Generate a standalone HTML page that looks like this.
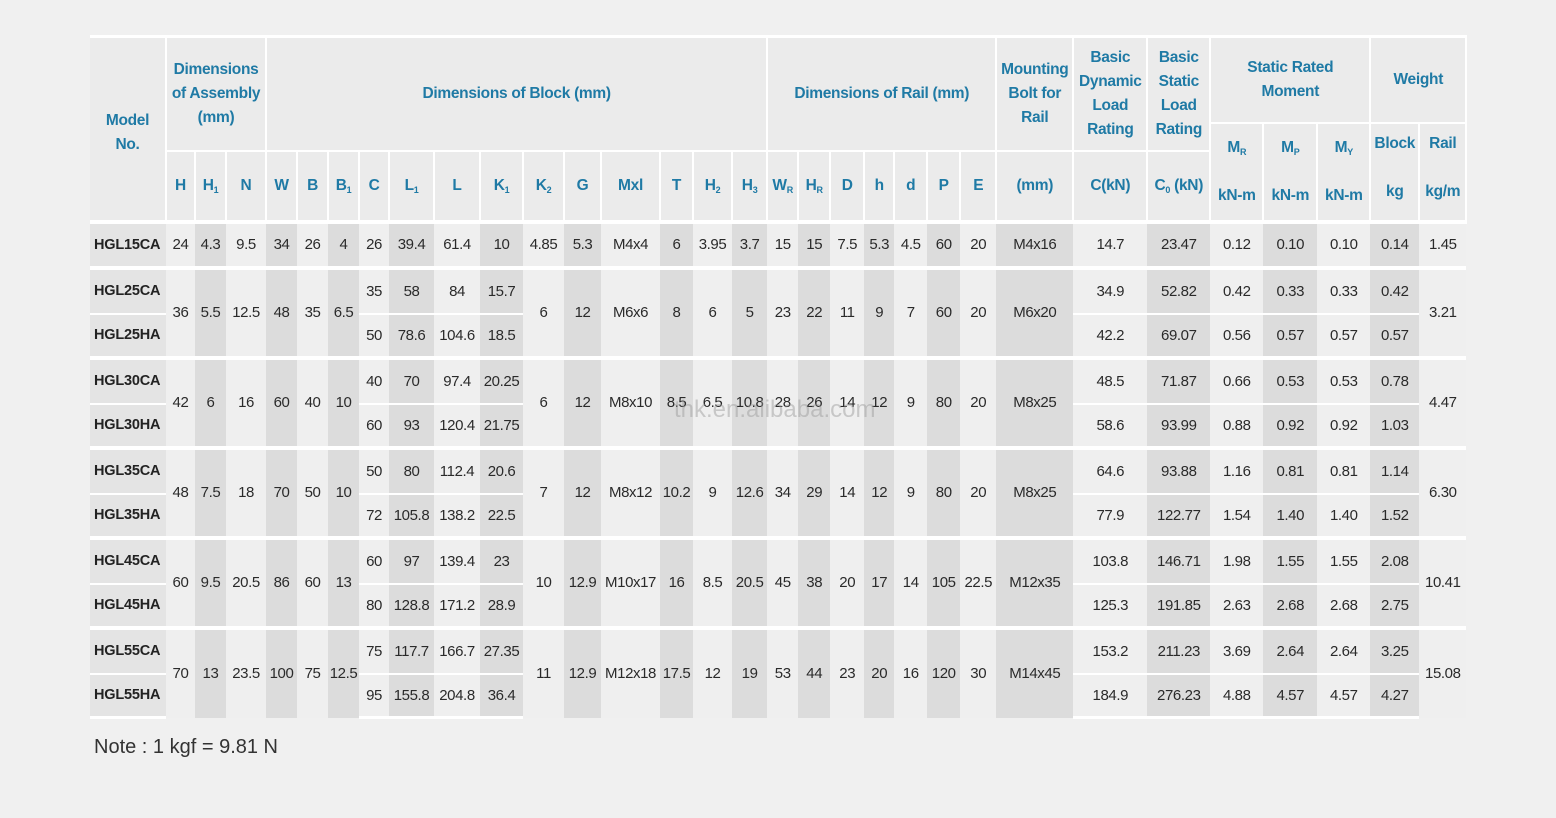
<!DOCTYPE html>
<html><head><meta charset="utf-8">
<style>
html,body{margin:0;padding:0;background:#f0f0f0;width:1556px;height:818px;overflow:hidden;position:relative}
table{position:absolute;left:90px;top:35px;border-collapse:collapse;table-layout:fixed;width:1376px;font-family:"Liberation Sans",sans-serif;}
td,th{padding:0;text-align:center;vertical-align:middle;white-space:nowrap;overflow:hidden}
th{background:#ebebeb;color:#1f7aa5;font-weight:bold;font-size:15.5px;line-height:24px;border:2px solid #fff;letter-spacing:-0.3px}
thead tr:first-child th{border-top:3px solid #fff}
thead th:first-child{border-left:none}
td{font-size:15px;color:#2a2a2a;border-left:none;border-right:none;letter-spacing:-0.4px}
td.m{font-weight:bold;text-align:left;padding-left:4px;font-size:14.5px;color:#222;letter-spacing:-0.2px}
tbody tr.g td{border-top:4px solid #fff}
tbody tr.s td{border-top:2px solid #fff}
tbody tr.last td{border-bottom:3px solid #fff}
sub{font-size:9px;vertical-align:-3px;line-height:0}
.dk{background:#dcdcdc}.lt{background:#efefef}.md{background:#e4e4e4}
.wm{position:absolute;left:674px;top:396px;font:24px "Liberation Sans",sans-serif;color:rgba(150,150,150,.45)}
.note{position:absolute;left:94px;top:736px;font:20px "Liberation Sans",sans-serif;color:#333}
</style></head><body>
<table>
<colgroup>
<col class="md" style="width:76px"><col class="lt" style="width:29px"><col class="dk" style="width:31px"><col class="lt" style="width:40px"><col class="dk" style="width:31px"><col class="lt" style="width:31px"><col class="dk" style="width:31px"><col class="lt" style="width:30px"><col class="dk" style="width:45px"><col class="lt" style="width:46px"><col class="dk" style="width:43px"><col class="lt" style="width:41px"><col class="dk" style="width:37px"><col class="lt" style="width:59px"><col class="dk" style="width:33px"><col class="lt" style="width:39px"><col class="dk" style="width:35px"><col class="lt" style="width:31px"><col class="dk" style="width:32px"><col class="lt" style="width:34px"><col class="dk" style="width:30px"><col class="lt" style="width:33px"><col class="dk" style="width:33px"><col class="lt" style="width:36px"><col class="dk" style="width:77px"><col class="lt" style="width:74px"><col class="dk" style="width:63px"><col class="lt" style="width:53px"><col class="dk" style="width:54px"><col class="lt" style="width:53px"><col class="dk" style="width:49px"><col class="lt" style="width:47px">
</colgroup>
<thead>
<tr style="height:86px">
<th rowspan="3" style="padding-top:8px">Model<br>No.</th>
<th colspan="3" rowspan="2">Dimensions<br>of Assembly<br>(mm)</th>
<th colspan="13" rowspan="2">Dimensions of Block (mm)</th>
<th colspan="7" rowspan="2">Dimensions of Rail (mm)</th>
<th rowspan="2">Mounting<br>Bolt for<br>Rail</th>
<th rowspan="2">Basic<br>Dynamic<br>Load<br>Rating</th>
<th rowspan="2">Basic<br>Static<br>Load<br>Rating</th>
<th colspan="3">Static Rated<br>Moment</th>
<th colspan="2">Weight</th>
</tr>
<tr style="height:28px">
<th rowspan="2">M<sub>R</sub><br><br>kN-m</th><th rowspan="2">M<sub>P</sub><br><br>kN-m</th><th rowspan="2">M<sub>Y</sub><br><br>kN-m</th>
<th rowspan="2" style="vertical-align:top;padding-top:8px">Block<br><br>kg</th><th rowspan="2" style="vertical-align:top;padding-top:8px">Rail<br><br>kg/m</th>
</tr>
<tr style="height:71px">
<th>H</th><th>H<sub>1</sub></th><th>N</th><th>W</th><th>B</th><th>B<sub>1</sub></th><th>C</th><th>L<sub>1</sub></th><th>L</th><th>K<sub>1</sub></th><th>K<sub>2</sub></th><th>G</th><th>Mxl</th><th>T</th><th>H<sub>2</sub></th><th>H<sub>3</sub></th><th>W<sub>R</sub></th><th>H<sub>R</sub></th><th>D</th><th>h</th><th>d</th><th>P</th><th>E</th><th>(mm)</th><th>C(kN)</th><th>C<sub>0</sub> (kN)</th>
</tr>
</thead>
<tbody>
<tr class="g" style="height:46px"><td class="m">HGL15CA</td><td>24</td><td>4.3</td><td>9.5</td><td>34</td><td>26</td><td>4</td><td>26</td><td>39.4</td><td>61.4</td><td>10</td><td>4.85</td><td>5.3</td><td>M4x4</td><td>6</td><td>3.95</td><td>3.7</td><td>15</td><td>15</td><td>7.5</td><td>5.3</td><td>4.5</td><td>60</td><td>20</td><td>M4x16</td><td>14.7</td><td>23.47</td><td>0.12</td><td>0.10</td><td>0.10</td><td>0.14</td><td>1.45</td></tr>

<tr class="g" style="height:46px"><td class="m">HGL25CA</td><td rowspan="2">36</td><td rowspan="2">5.5</td><td rowspan="2">12.5</td><td rowspan="2">48</td><td rowspan="2">35</td><td rowspan="2">6.5</td><td>35</td><td>58</td><td>84</td><td>15.7</td><td rowspan="2">6</td><td rowspan="2">12</td><td rowspan="2">M6x6</td><td rowspan="2">8</td><td rowspan="2">6</td><td rowspan="2">5</td><td rowspan="2">23</td><td rowspan="2">22</td><td rowspan="2">11</td><td rowspan="2">9</td><td rowspan="2">7</td><td rowspan="2">60</td><td rowspan="2">20</td><td rowspan="2">M6x20</td><td>34.9</td><td>52.82</td><td>0.42</td><td>0.33</td><td>0.33</td><td>0.42</td><td rowspan="2">3.21</td></tr>
<tr class="s" style="height:44px"><td class="m">HGL25HA</td><td>50</td><td>78.6</td><td>104.6</td><td>18.5</td><td>42.2</td><td>69.07</td><td>0.56</td><td>0.57</td><td>0.57</td><td>0.57</td></tr>

<tr class="g" style="height:46px"><td class="m">HGL30CA</td><td rowspan="2">42</td><td rowspan="2">6</td><td rowspan="2">16</td><td rowspan="2">60</td><td rowspan="2">40</td><td rowspan="2">10</td><td>40</td><td>70</td><td>97.4</td><td>20.25</td><td rowspan="2">6</td><td rowspan="2">12</td><td rowspan="2">M8x10</td><td rowspan="2">8.5</td><td rowspan="2">6.5</td><td rowspan="2">10.8</td><td rowspan="2">28</td><td rowspan="2">26</td><td rowspan="2">14</td><td rowspan="2">12</td><td rowspan="2">9</td><td rowspan="2">80</td><td rowspan="2">20</td><td rowspan="2">M8x25</td><td>48.5</td><td>71.87</td><td>0.66</td><td>0.53</td><td>0.53</td><td>0.78</td><td rowspan="2">4.47</td></tr>
<tr class="s" style="height:44px"><td class="m">HGL30HA</td><td>60</td><td>93</td><td>120.4</td><td>21.75</td><td>58.6</td><td>93.99</td><td>0.88</td><td>0.92</td><td>0.92</td><td>1.03</td></tr>

<tr class="g" style="height:46px"><td class="m">HGL35CA</td><td rowspan="2">48</td><td rowspan="2">7.5</td><td rowspan="2">18</td><td rowspan="2">70</td><td rowspan="2">50</td><td rowspan="2">10</td><td>50</td><td>80</td><td>112.4</td><td>20.6</td><td rowspan="2">7</td><td rowspan="2">12</td><td rowspan="2">M8x12</td><td rowspan="2">10.2</td><td rowspan="2">9</td><td rowspan="2">12.6</td><td rowspan="2">34</td><td rowspan="2">29</td><td rowspan="2">14</td><td rowspan="2">12</td><td rowspan="2">9</td><td rowspan="2">80</td><td rowspan="2">20</td><td rowspan="2">M8x25</td><td>64.6</td><td>93.88</td><td>1.16</td><td>0.81</td><td>0.81</td><td>1.14</td><td rowspan="2">6.30</td></tr>
<tr class="s" style="height:44px"><td class="m">HGL35HA</td><td>72</td><td>105.8</td><td>138.2</td><td>22.5</td><td>77.9</td><td>122.77</td><td>1.54</td><td>1.40</td><td>1.40</td><td>1.52</td></tr>

<tr class="g" style="height:46px"><td class="m">HGL45CA</td><td rowspan="2">60</td><td rowspan="2">9.5</td><td rowspan="2">20.5</td><td rowspan="2">86</td><td rowspan="2">60</td><td rowspan="2">13</td><td>60</td><td>97</td><td>139.4</td><td>23</td><td rowspan="2">10</td><td rowspan="2">12.9</td><td rowspan="2">M10x17</td><td rowspan="2">16</td><td rowspan="2">8.5</td><td rowspan="2">20.5</td><td rowspan="2">45</td><td rowspan="2">38</td><td rowspan="2">20</td><td rowspan="2">17</td><td rowspan="2">14</td><td rowspan="2">105</td><td rowspan="2">22.5</td><td rowspan="2">M12x35</td><td>103.8</td><td>146.71</td><td>1.98</td><td>1.55</td><td>1.55</td><td>2.08</td><td rowspan="2">10.41</td></tr>
<tr class="s" style="height:44px"><td class="m">HGL45HA</td><td>80</td><td>128.8</td><td>171.2</td><td>28.9</td><td>125.3</td><td>191.85</td><td>2.63</td><td>2.68</td><td>2.68</td><td>2.75</td></tr>

<tr class="g" style="height:46px"><td class="m">HGL55CA</td><td rowspan="2">70</td><td rowspan="2">13</td><td rowspan="2">23.5</td><td rowspan="2">100</td><td rowspan="2">75</td><td rowspan="2">12.5</td><td>75</td><td>117.7</td><td>166.7</td><td>27.35</td><td rowspan="2">11</td><td rowspan="2">12.9</td><td rowspan="2">M12x18</td><td rowspan="2">17.5</td><td rowspan="2">12</td><td rowspan="2">19</td><td rowspan="2">53</td><td rowspan="2">44</td><td rowspan="2">23</td><td rowspan="2">20</td><td rowspan="2">16</td><td rowspan="2">120</td><td rowspan="2">30</td><td rowspan="2">M14x45</td><td>153.2</td><td>211.23</td><td>3.69</td><td>2.64</td><td>2.64</td><td>3.25</td><td rowspan="2">15.08</td></tr>
<tr class="s last" style="height:44px"><td class="m">HGL55HA</td><td>95</td><td>155.8</td><td>204.8</td><td>36.4</td><td>184.9</td><td>276.23</td><td>4.88</td><td>4.57</td><td>4.57</td><td>4.27</td></tr>
</tbody>
</table>
<div class="wm">thk.en.alibaba.com</div>
<div class="note">Note : 1 kgf = 9.81 N</div>
</body></html>
